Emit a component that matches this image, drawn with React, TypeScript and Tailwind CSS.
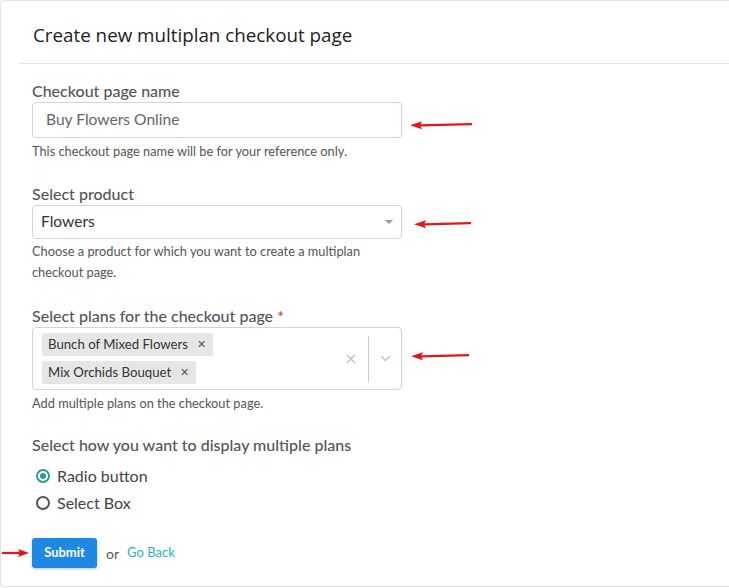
import React from "react";

const Arrow = ({ w = 60 }: { w?: number }) => (
  <svg width={w} height="10" viewBox={`0 0 ${w} 10`} className="block">
    <path d={`M${w} 4.2 L10 5.3`} stroke="#e8141a" strokeWidth="2.2" fill="none" />
    <path d="M0 5.2 L12 1.2 L10 5.2 L12 9.2 Z" fill="#e8141a" />
  </svg>
);

const ArrowRight = ({ w = 27 }: { w?: number }) => (
  <svg width={w} height="10" viewBox={`0 0 ${w} 10`} className="block">
    <path d={`M0 5 L${w - 8} 5`} stroke="#e8141a" strokeWidth="2.2" fill="none" />
    <path d={`M${w} 5 L${w - 11} 1 L${w - 9} 5 L${w - 11} 9 Z`} fill="#e8141a" />
  </svg>
);

export default function App() {
  const body = { fontFamily: "Lato, 'Noto Sans', sans-serif" };
  return (
    <div className="w-[729px] h-[588px] overflow-hidden bg-white" style={body}>
      <div className="w-[780px] h-[587px] border border-[#e2e2e2] rounded-[3px] bg-white">
        <div className="pt-[21px] pb-[15px] pl-[32px]">
          <h1
            className="text-[18.8px] leading-[26px] text-[#222]"
            style={{ fontFamily: "'Open Sans', 'Noto Sans', sans-serif" }}
          >
            Create new multiplan checkout page
          </h1>
        </div>
        <div className="ml-[18px] h-px bg-[#e3e3e3]" />

        <div className="pl-[31px]">
          <div className="pt-[17px] text-[16px] leading-[20px] text-[#555] font-medium">Checkout page name</div>
          <div className="mt-px flex items-center">
            <div className="w-[370px] h-[36px] border border-[#d4d4d4] rounded-[4px] flex items-center pl-[13px] text-[15.6px] text-[#666]">
              Buy Flowers Online
            </div>
            <div className="ml-[8px] mt-[10px]">
              <Arrow w={62} />
            </div>
          </div>
          <div className="mt-[3px] text-[12.8px] leading-[20px] text-[#555]">
            This checkout page name will be for your reference only.
          </div>

          <div className="mt-[23px] text-[16px] leading-[20px] text-[#555] font-medium">Select product</div>
          <div className="mt-px flex items-center">
            <div className="w-[370px] h-[34px] border border-[#d4d4d4] rounded-[4px] flex items-center pl-[8px] pr-[8px] text-[15.6px] text-[#333]">
              <span className="flex-1">Flowers</span>
              <svg width="8" height="4" viewBox="0 0 8 4">
                <path d="M0 0 L8 0 L4 4 Z" fill="#999" />
              </svg>
            </div>
            <div className="ml-[12px] mt-[3px]">
              <Arrow w={57} />
            </div>
          </div>
          <div className="mt-[2px] text-[12.8px] leading-[21px] text-[#555] w-[370px]">
            Choose a product for which you want to create a multiplan
            <br />
            checkout page.
          </div>

          <div className="mt-[23px] text-[16px] leading-[20px] text-[#555] font-medium">
            Select plans for the checkout page <span className="text-[#e53935]">*</span>
          </div>
          <div className="mt-px flex items-center">
            <div className="w-[370px] h-[63px] border border-[#d4d4d4] rounded-[4px] flex items-center">
              <div className="flex-1 flex flex-col gap-[5px] pl-[9px]">
                {["Bunch of Mixed Flowers", "Mix Orchids Bouquet"].map((t) => (
                  <div key={t} className="flex">
                    <div className="h-[23px] bg-[#e6e6e6] rounded-[2px] flex items-center pl-[6px] pr-[7px] text-[13.2px] text-[#333]">
                      <span>{t}</span>
                      <span className="ml-[9px] text-[11px] text-[#555]">✕</span>
                    </div>
                  </div>
                ))}
              </div>
              <svg width="10" height="10" viewBox="0 0 10 10" className="mr-[12px]">
                <path d="M1 1 L9 9 M9 1 L1 9" stroke="#c4c4c4" strokeWidth="1.6" />
              </svg>
              <div className="w-px h-[46px] bg-[#ccc]" />
              <div className="w-[32px] flex justify-center">
                <svg width="11" height="7" viewBox="0 0 11 7">
                  <path d="M1 1 L5.5 5.5 L10 1" stroke="#c4c4c4" strokeWidth="1.5" fill="none" />
                </svg>
              </div>
            </div>
            <div className="ml-[9px] mt-[-5px]">
              <Arrow w={58} />
            </div>
          </div>
          <div className="mt-[3px] text-[12.8px] leading-[20px] text-[#555]">
            Add multiple plans on the checkout page.
          </div>

          <div className="mt-[22px] text-[16px] leading-[20px] text-[#555] font-medium">
            Select how you want to display multiple plans
          </div>
          <div className="mt-[7px]">
            <div className="h-[27px] flex items-center">
              <span className="ml-[4px] w-[14px] h-[14px] rounded-full border-2 border-[#2a9d8f] flex items-center justify-center">
                <span className="w-[6px] h-[6px] rounded-full bg-[#2a9d8f]" />
              </span>
              <span className="ml-[7px] text-[16px] text-[#444]">Radio button</span>
            </div>
            <div className="h-[27px] flex items-center">
              <span className="ml-[4px] w-[14px] h-[14px] rounded-full border-2 border-[#555]" />
              <span className="ml-[7px] text-[16px] text-[#444]">Select Box</span>
            </div>
          </div>

          <div className="mt-[22px] flex items-center relative">
            <div className="absolute left-[-30px] top-[10px]">
              <ArrowRight w={27} />
            </div>
            <button className="h-[30px] w-[65px] bg-[#1e88e5] rounded-[3px] text-white text-[13px] font-bold shadow-[0_1px_3px_rgba(0,0,0,0.25)]">
              Submit
            </button>
            <span className="ml-[9px] text-[14px] text-[#555]">or</span>
            <span className="ml-[8px] text-[13px] text-[#1fb3c6]">Go Back</span>
          </div>
        </div>
      </div>
    </div>
  );
}
